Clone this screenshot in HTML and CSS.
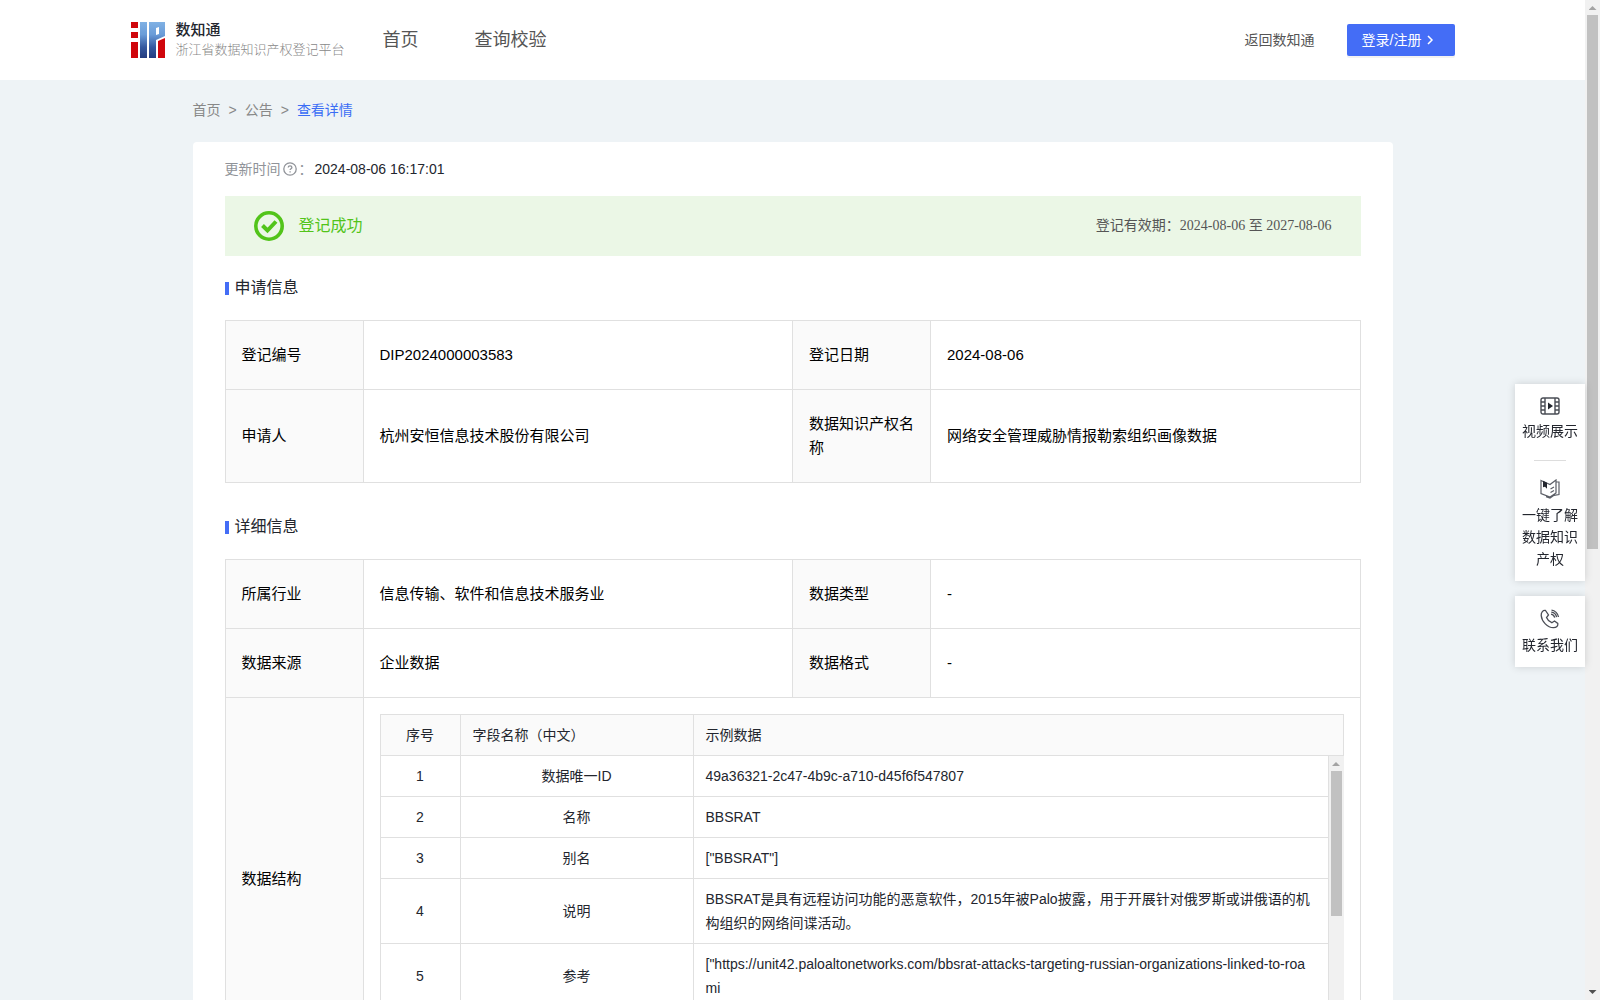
FILE: index.html
```html
<!DOCTYPE html>
<html lang="zh-CN">
<head>
<meta charset="utf-8">
<title>数知通 - 查看详情</title>
<link rel="stylesheet" href="styles.css">
</head>
<body>
<div class="viewport">
  <div class="page">
    <header class="header">
      <div class="header-inner">
        <a class="brand" href="#">
          <svg class="brand-logo" width="34" height="36" viewBox="0 0 34 36" aria-hidden="true">
            <defs>
              <linearGradient id="blue" x1="0" y1="0" x2="0" y2="36" gradientUnits="userSpaceOnUse">
                <stop offset="0" stop-color="#80b1e4"/>
                <stop offset="0.35" stop-color="#6a9cd8"/>
                <stop offset="0.7" stop-color="#34589f"/>
                <stop offset="1" stop-color="#233c80"/>
              </linearGradient>
            </defs>
            <path fill="#d0060c" d="M0 0h7v6H0zM0 10h7v6H0zM0 20h7v16H0zM27 19l7-3v20h-7z"/>
            <path fill="url(#blue)" d="M9 0h7v36H9zM18 0h16v14l-9 4v18h-7zM25 6v7l3-1V5z" fill-rule="evenodd"/>
          </svg>
          <span class="brand-text">
            <strong class="brand-name">数知通</strong>
            <span class="brand-sub">浙江省数据知识产权登记平台</span>
          </span>
        </a>
        <nav class="nav">
          <a href="#">首页</a>
          <a href="#">查询校验</a>
        </nav>
        <div class="header-actions">
          <a class="back" href="#">返回数知通</a>
          <button class="login" type="button">登录/注册
            <svg width="8" height="10" viewBox="0 0 8 10" fill="none" stroke="#fff" stroke-width="1.5" aria-hidden="true"><path d="M2 1l4 4-4 4"/></svg>
          </button>
        </div>
      </div>
    </header>

    <main class="main">
      <nav class="crumbs" aria-label="面包屑">
        <a href="#">首页</a><span class="crumb-sep">&gt;</span><a href="#">公告</a><span class="crumb-sep">&gt;</span><a class="current" href="#">查看详情</a>
      </nav>

      <article class="card">
        <div class="updated">
          <span>更新时间</span>
          <svg width="14" height="14" viewBox="0 0 14 14" fill="none" stroke="#909399" stroke-width="1.3" aria-hidden="true"><circle cx="7" cy="7" r="6.2"/><path d="M5.2 5.6c0-2.4 3.7-2.3 3.7-.1 0 1.3-1.8 1.3-1.8 2.6M7.1 9.3v1.2"/></svg>
          <span class="colon">：</span>
          <time class="updated-time">2024-08-06 16:17:01</time>
        </div>

        <div class="banner">
          <svg width="30" height="30" viewBox="0 0 30 30" fill="none" stroke="#52c41a" aria-hidden="true"><circle cx="15" cy="15" r="13.2" stroke-width="3.6"/><path d="M8.500 14.500l5 5L22 10.500" stroke-width="4"/></svg>
          <span class="banner-status">登记成功</span>
          <span class="banner-period">登记有效期：<span>2024-08-06 至 2027-08-06</span></span>
        </div>

        <h2 class="section-title">申请信息</h2>
        <table class="info">
          <colgroup><col class="col-label"><col><col class="col-label"><col></colgroup>
          <tr><th>登记编号</th><td>DIP2024000003583</td><th>登记日期</th><td>2024-08-06</td></tr>
          <tr><th>申请人</th><td>杭州安恒信息技术股份有限公司</td><th>数据知识产权名称</th><td>网络安全管理威胁情报勒索组织画像数据</td></tr>
        </table>

        <h2 class="section-title section-next">详细信息</h2>
        <table class="info">
          <colgroup><col class="col-label"><col><col class="col-label"><col></colgroup>
          <tr><th>所属行业</th><td>信息传输、软件和信息技术服务业</td><th>数据类型</th><td>-</td></tr>
          <tr><th>数据来源</th><td>企业数据</td><th>数据格式</th><td>-</td></tr>
          <tr>
            <th>数据结构</th>
            <td class="nested" colspan="3">
              <div class="fields">
                <table class="grid grid-head">
                  <colgroup><col class="col-no"><col class="col-name"><col></colgroup>
                  <tr><th class="center">序号</th><th>字段名称（中文）</th><th>示例数据</th></tr>
                </table>
                <div class="fields-body">
                  <table class="grid">
                    <colgroup><col class="col-no"><col class="col-name"><col></colgroup>
                    <tr><td>1</td><td>数据唯一ID</td><td>49a36321-2c47-4b9c-a710-d45f6f547807</td></tr>
                    <tr><td>2</td><td>名称</td><td>BBSRAT</td></tr>
                    <tr><td>3</td><td>别名</td><td>["BBSRAT"]</td></tr>
                    <tr><td>4</td><td>说明</td><td>BBSRAT是具有远程访问功能的恶意软件，2015年被Palo披露，用于开展针对俄罗斯或讲俄语的机构组织的网络间谍活动。</td></tr>
                    <tr><td>5</td><td>参考</td><td>["https://unit42.paloaltonetworks.com/bbsrat-attacks-targeting-russian-organizations-linked-to-roami</td></tr>
                  </table>
                  <div class="scrollbar" aria-hidden="true">
                    <i class="arrow up"></i><i class="thumb thumb-fields"></i>
                  </div>
                </div>
              </div>
            </td>
          </tr>
        </table>
      </article>
    </main>

    <aside class="float">
      <div class="float-group">
        <a class="float-item" href="#">
          <svg width="20" height="18" viewBox="0 0 20 18" fill="none" stroke="#4a4d55" stroke-width="1.4" aria-hidden="true"><rect x="1" y="1" width="18" height="16" rx="2"/><path d="M5 1v16M15 1v16M1 5h4M1 9h4M1 13h4M15 5h4M15 9h4M15 13h4"/><path d="M8 5.500v7l5-3.500z" fill="#23262e" stroke="none"/></svg>
          <span>视频展示</span>
        </a>
        <hr class="float-line">
        <a class="float-item" href="#">
          <svg width="20" height="20" viewBox="0 0 20 20" fill="none" stroke="#5a5d65" stroke-width="1.2" aria-hidden="true"><path d="M1 1.500l9 4 6-4.500v13l-6 4-9-3.500zM16 3h3v12.500l-5 .8-4 2.700-4-1.300"/><path d="M10.500 10l3.500-2M10.500 13.500l3.500-2"/><path d="M3 1.800l4 2v6L5 7.800l-2 .500z" fill="#23262e" stroke="none"/></svg>
          <span>一键了解数据知识产权</span>
        </a>
      </div>
      <div class="float-group">
        <a class="float-item" href="#">
          <svg width="20" height="20" viewBox="0 0 20 20" fill="none" stroke="#4a4d55" stroke-width="1.3" aria-hidden="true"><path d="M5.500 1.500C3 1 1 3.500 1.200 6.500c.5 6 6.300 12.300 12.300 12.200 3 0 4.800-2 4.300-4.200L14.500 12l-2.700 1.700C9.500 12.800 7.300 10.500 6.500 8.500L8.500 6z"/><path d="M11 5.200c1.800.2 3.300 1.700 3.700 3.500M11.500 1.200c3.500.3 6.500 3.300 7 6.800M11.300 3.200c2.700.3 4.800 2.300 5.300 5"/></svg>
          <span>联系我们</span>
        </a>
      </div>
    </aside>
  </div>

  <div class="scrollbar scrollbar-page" aria-hidden="true">
    <i class="arrow up"></i><i class="thumb thumb-page"></i><i class="arrow down"></i>
  </div>
</div>
</body>
</html>
```
FILE: styles.css
```css
* { box-sizing: border-box; }

body {
  margin: 0;
  font-family: "Liberation Sans", "Noto Sans CJK SC", sans-serif;
  font-size: 14px;
  line-height: 24px;
  color: #23262e;
}

a { color: inherit; text-decoration: none; }
svg { display: block; flex: none; }

/* window: scrolled page beside its scrollbar */
.viewport {
  display: flex;
  height: 100vh;
  overflow: hidden;
}

.page {
  flex: 1;
  min-width: 0;
  overflow: hidden;
  background: #eef3f6;
}

.scrollbar {
  display: flex;
  flex-direction: column;
  align-items: center;
  flex: none;
  width: 15px;
  padding: 6px 0;
  background: #f1f1f1;
}

.arrow {
  width: 8px;
  height: 4px;
  background: #a3a3a3;
}
.arrow.up { clip-path: polygon(50% 0, 100% 100%, 0 100%); }
.arrow.down {
  margin-top: auto;
  background: #505050;
  clip-path: polygon(0 0, 100% 0, 50% 100%);
}

.thumb {
  width: 11px;
  margin-top: 5px;
  background: #c1c1c1;
}
.thumb-page { height: 54%; }
.thumb-fields { height: 145px; }

/* header */
.header { background: #fff; }

.header-inner {
  display: flex;
  align-items: center;
  max-width: 1324px;
  height: 80px;
  margin: 0 auto;
}

.brand { display: flex; align-items: center; gap: 11px; }
.brand-text { display: flex; flex-direction: column; }
.brand-name {
  font-size: 15px;
  font-weight: 500;
  line-height: 20px;
}
.brand-sub {
  font-size: 13px;
  font-weight: 300;
  line-height: 20px;
  color: #888;
}

.nav {
  display: flex;
  gap: 56px;
  margin-left: 38px;
  font-size: 18px;
  color: #555;
}

.header-actions {
  display: flex;
  align-items: center;
  gap: 32px;
  margin-left: auto;
  color: #555;
}

.login {
  display: flex;
  align-items: center;
  gap: 5px;
  width: 108px;
  height: 32px;
  padding: 0 15px;
  border: 0;
  border-radius: 2px;
  background: #446df6;
  box-shadow: 0 2px 0 rgba(0, 0, 0, 0.05);
  color: #fff;
  font: inherit;
  white-space: nowrap;
}

/* content */
.main {
  max-width: 1200px;
  margin: 0 auto;
}

.crumbs {
  display: flex;
  gap: 8px;
  padding: 18px 0 20px;
  color: #888;
}
.crumbs .current { color: #3b6df5; }

.card {
  padding: 15px 32px 32px;
  border-radius: 4px;
  background: #fff;
}

.updated {
  display: flex;
  align-items: center;
  gap: 2px;
  color: #909399;
}
.colon { width: 14px; }
.updated-time { color: #23262e; }

.banner {
  display: flex;
  align-items: center;
  gap: 15px;
  height: 60px;
  margin-top: 15px;
  padding: 0 29px;
  background: #ebf7e6;
}
.banner-status { font-size: 16px; color: #52c41a; }
.banner-period {
  margin-left: auto;
  font-family: "Liberation Serif", "Noto Sans CJK SC", serif;
  color: #555;
}

.section-title {
  display: flex;
  align-items: center;
  gap: 6px;
  margin: 20px 0;
  font-size: 16px;
  font-weight: 400;
  line-height: 24px;
}
.section-title::before {
  content: "";
  width: 4px;
  height: 13px;
  background: #446df6;
}
.section-next { margin-top: 32px; }

.info, .grid {
  width: 100%;
  border-collapse: collapse;
  table-layout: fixed;
}

.info { font-size: 15px; color: #000; }
.col-label { width: 138px; }
.info th, .info td {
  padding: 22px 16px;
  border: 1px solid #e0e0e0;
  font-weight: 400;
  text-align: left;
}
.info th { background: #fafafa; }
.info .nested { padding: 16px; }

/* field list inside the detail table */
.col-no { width: 80px; }
.col-name { width: 233px; }
.grid { font-size: 14px; color: #23262e; }
.info .grid th, .info .grid td {
  padding: 8px 12px;
  word-break: break-all;
}
.info .grid td { text-align: center; }
.info .grid td:last-child { text-align: left; }
.info .grid .center { text-align: center; }
.fields-body {
  display: flex;
  height: 288px;
  overflow: hidden;
}
.fields-body .grid { flex: 1; height: 0; }
.info .fields-body tr:first-child td { border-top: 0; }

/* floating shortcuts on the right edge */
.float {
  position: fixed;
  top: 384px;
  right: 15px;
  display: flex;
  flex-direction: column;
  gap: 15px;
  width: 70px;
}
.float-group {
  padding: 13px 7px 11px;
  background: #fff;
  box-shadow: 0 0 8px rgba(0, 0, 0, 0.15);
}
.float-item {
  display: flex;
  flex-direction: column;
  align-items: center;
  gap: 5px;
  line-height: 22px;
  text-align: center;
}
.float-line {
  width: 32px;
  margin: 18px auto;
  border: 0;
  border-top: 1px solid #ddd;
}
```
